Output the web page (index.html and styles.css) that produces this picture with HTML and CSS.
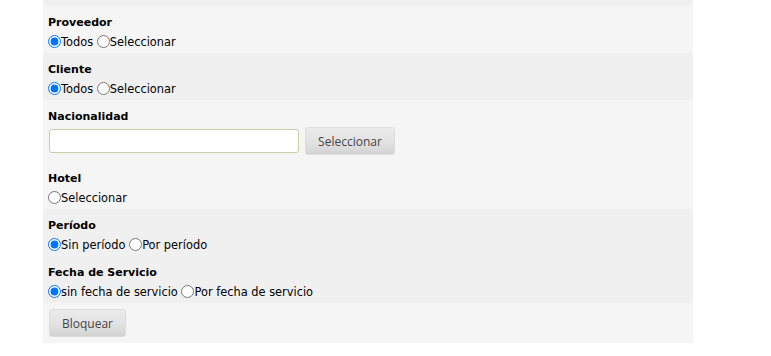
FILE: index.html
```html
<!DOCTYPE html>
<html lang="es">

<head>
    <meta charset="UTF-8">
    <meta name="viewport" content="width=device-width, initial-scale=1.0">
    <title>Bloqueo</title>
    <link rel="stylesheet" href="styles.css">
</head>

<body>
    <form class="filter-form">
        <div class="row alt top-strip"></div>

        <div class="row">
            <div class="field">
                <div class="field-label">Proveedor</div>
                <div class="options">
                    <label><input type="radio" name="proveedor" checked>Todos</label>
                    <label><input type="radio" name="proveedor">Seleccionar</label>
                </div>
            </div>
        </div>

        <div class="row alt">
            <div class="field">
                <div class="field-label">Cliente</div>
                <div class="options">
                    <label><input type="radio" name="cliente" checked>Todos</label>
                    <label><input type="radio" name="cliente">Seleccionar</label>
                </div>
            </div>
        </div>

        <div class="row">
            <div class="field field-input">
                <div class="field-label">Nacionalidad</div>
                <div class="input-line">
                    <input type="text" class="text-input" name="nacionalidad">
                    <button type="button" class="btn">Seleccionar</button>
                </div>
            </div>
            <div class="field">
                <div class="field-label">Hotel</div>
                <div class="options">
                    <label><input type="radio" name="hotel">Seleccionar</label>
                </div>
            </div>
        </div>

        <div class="row alt">
            <div class="field">
                <div class="field-label">Período</div>
                <div class="options">
                    <label><input type="radio" name="periodo" checked>Sin período</label>
                    <label><input type="radio" name="periodo">Por período</label>
                </div>
            </div>
            <div class="field">
                <div class="field-label">Fecha de Servicio</div>
                <div class="options">
                    <label><input type="radio" name="fecha" checked>sin fecha de servicio</label>
                    <label><input type="radio" name="fecha">Por fecha de servicio</label>
                </div>
            </div>
        </div>

        <div class="row actions">
            <button type="submit" class="btn btn-small">Bloquear</button>
        </div>
    </form>
</body>

</html>
```

FILE: styles.css
```css
body {
    margin: 0;
    background-color: white;
    font-family: "DejaVu Sans", Verdana, sans-serif;
    font-size: 11.4px;
    color: black;
}

.filter-form {
    width: 650px;
    margin-left: 43px;
}

.row {
    background-color: #f5f5f5;
    padding: 0 5px;
}

.row.alt {
    background-color: #f0f0f0;
}

.top-strip {
    height: 6px;
}

.field {
    height: 47px;
    box-sizing: border-box;
    padding-top: 9px;
}

.field-label {
    font-weight: bold;
    font-size: 11px;
    line-height: 16px;
    height: 16px;
}

.options {
    margin-top: 3px;
    line-height: 16px;
}

.options input[type="radio"] {
    width: 13px;
    height: 13px;
    margin: 0;
    vertical-align: -2px;
}

.field-input {
    height: 62px;
}

.input-line {
    display: flex;
    align-items: center;
    gap: 6px;
    margin-top: 2px;
    margin-left: 1px;
}

.text-input {
    width: 250px;
    height: 24px;
    box-sizing: border-box;
    border: 1px solid #c9cfa6;
    border-radius: 3px;
    background-color: white;
    padding: 2px 4px;
}

.btn {
    height: 28px;
    width: 90px;
    border: 1px solid #dcdcdc;
    border-radius: 3px;
    background: linear-gradient(#ebebeb, #e2e2e2 55%, #d3d3d3);
    color: #444;
    font-family: "Open Sans", sans-serif;
    font-size: 12px;
    cursor: pointer;
}

.btn-small {
    width: 77px;
}

.actions {
    height: 40px;
    box-sizing: border-box;
    padding: 6px 6px 0;
}
```
